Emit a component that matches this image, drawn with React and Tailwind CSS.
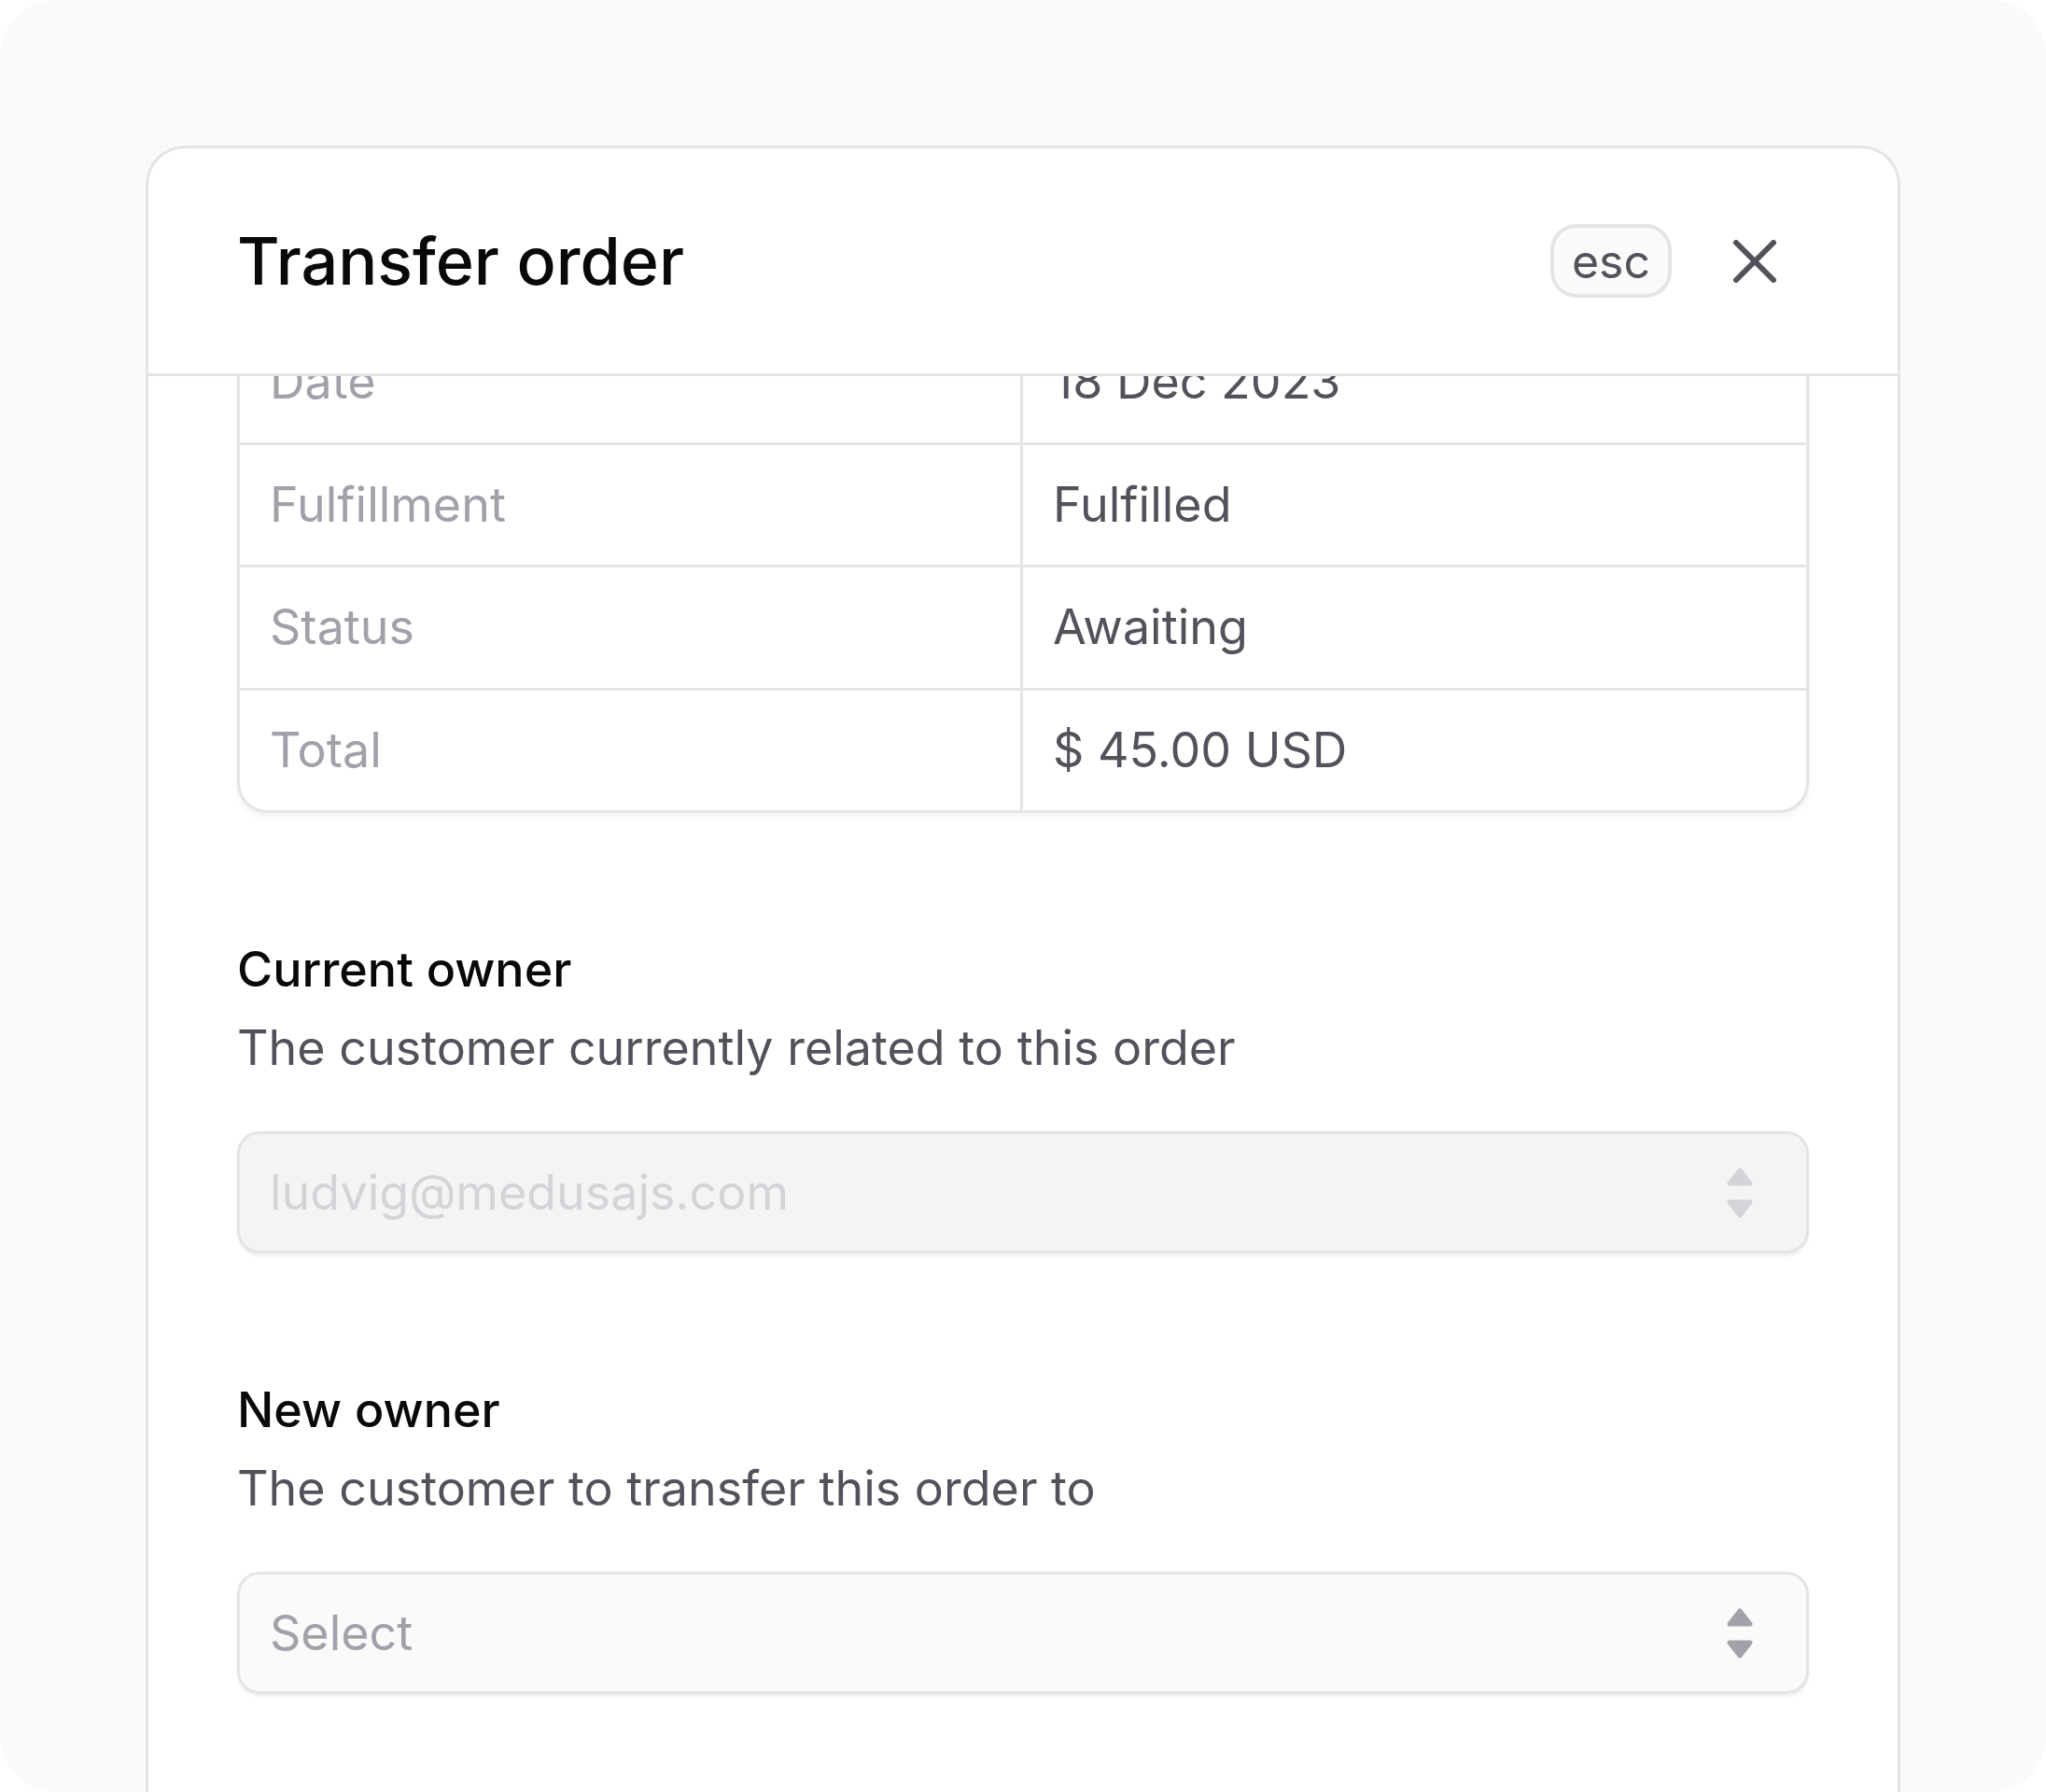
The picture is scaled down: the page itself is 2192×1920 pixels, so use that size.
import React from "react";

const rows = [
  { label: "Date", value: "18 Dec 2023" },
  { label: "Fulfillment", value: "Fulfilled" },
  { label: "Status", value: "Awaiting" },
  { label: "Total", value: "$ 45.00 USD" },
];

const SortIcon = ({ color }) => (
  <svg width="28" height="54" viewBox="0 0 28 54" fill={color} stroke={color} strokeWidth="5" strokeLinejoin="round">
    <polygon points="14,3 25,17 3,17" />
    <polygon points="3,37 25,37 14,51" />
  </svg>
);

const SelectBox = ({ text, disabled }) => (
  <div
    className={`mt-[53px] h-[131px] flex items-center justify-between rounded-[24px] border-[3px] border-[#e4e4e7] pl-[32px] pr-[57px] shadow-[0_3px_3px_rgba(0,0,0,0.06)] ${
      disabled ? "bg-[#f4f4f5]" : "bg-[#fafafa]"
    }`}
  >
    <span className={`text-[52px] leading-none ${disabled ? "text-[#d4d4d8]" : "text-[#a1a1aa]"}`}>
      {text}
    </span>
    <SortIcon color={disabled ? "#d4d4d8" : "#a1a1aa"} />
  </div>
);

const Section = ({ title, desc, children }) => (
  <div className="mt-[132px]">
    <div className="text-[52px] leading-[72px] font-medium text-[#09090b]">{title}</div>
    <div className="mt-[12px] text-[52px] leading-[72px] text-[#52525b]">{desc}</div>
    {children}
  </div>
);

export default function App() {
  return (
    <div className="bg-white font-['Inter',sans-serif]">
      <div className="h-[1920px] rounded-[60px] bg-[#fafafa] overflow-hidden pt-[156px] px-[156px]">
        <div className="h-[1800px] flex flex-col bg-white border-[3px] border-b-0 border-[#e4e4e7] rounded-t-[42px]">
          {/* header */}
          <div className="h-[244px] shrink-0 flex items-center justify-between border-b-[3px] border-[#e4e4e7] px-[95px]">
            <h1 className="text-[70px] leading-none font-medium text-[#09090b]">Transfer order</h1>
            <div className="flex items-center">
              <div className="w-[130px] h-[79px] flex items-center justify-center rounded-[28px] border-[4px] border-[#e4e4e7] bg-[#fafafa] text-[50px] leading-none text-[#52525b]">
                esc
              </div>
              <button className="ml-[66px] mr-[35px] flex items-center justify-center">
                <svg width="46" height="46" viewBox="0 0 46 46" fill="none" stroke="#52525b" strokeWidth="6" strokeLinecap="round">
                  <path d="M3 3L43 43" />
                  <path d="M43 3L3 43" />
                </svg>
              </button>
            </div>
          </div>

          {/* body, scrolled a little */}
          <div className="flex-1 overflow-hidden">
            <div className="mt-[-61px] px-[95px]">
              <div className="border-[3px] border-[#e4e4e7] rounded-b-[32px] overflow-hidden shadow-[0_4px_6px_rgba(0,0,0,0.05)]">
                {rows.map((r, i) => (
                  <div
                    key={r.label}
                    className={`grid grid-cols-2 h-[128.5px] box-content ${
                      i < rows.length - 1 ? "border-b-[3px] border-[#e4e4e7]" : ""
                    }`}
                  >
                    <div className="flex items-center px-[32px] border-r-[3px] border-[#e4e4e7] text-[52px] leading-none text-[#a1a1aa]">
                      {r.label}
                    </div>
                    <div className="flex items-center px-[32px] text-[52px] leading-none text-[#52525b]">
                      {r.value}
                    </div>
                  </div>
                ))}
              </div>

              <Section title="Current owner" desc="The customer currently related to this order">
                <SelectBox text="ludvig@medusajs.com" disabled />
              </Section>

              <Section title="New owner" desc="The customer to transfer this order to">
                <SelectBox text="Select" />
              </Section>
            </div>
          </div>
        </div>
      </div>
    </div>
  );
}
